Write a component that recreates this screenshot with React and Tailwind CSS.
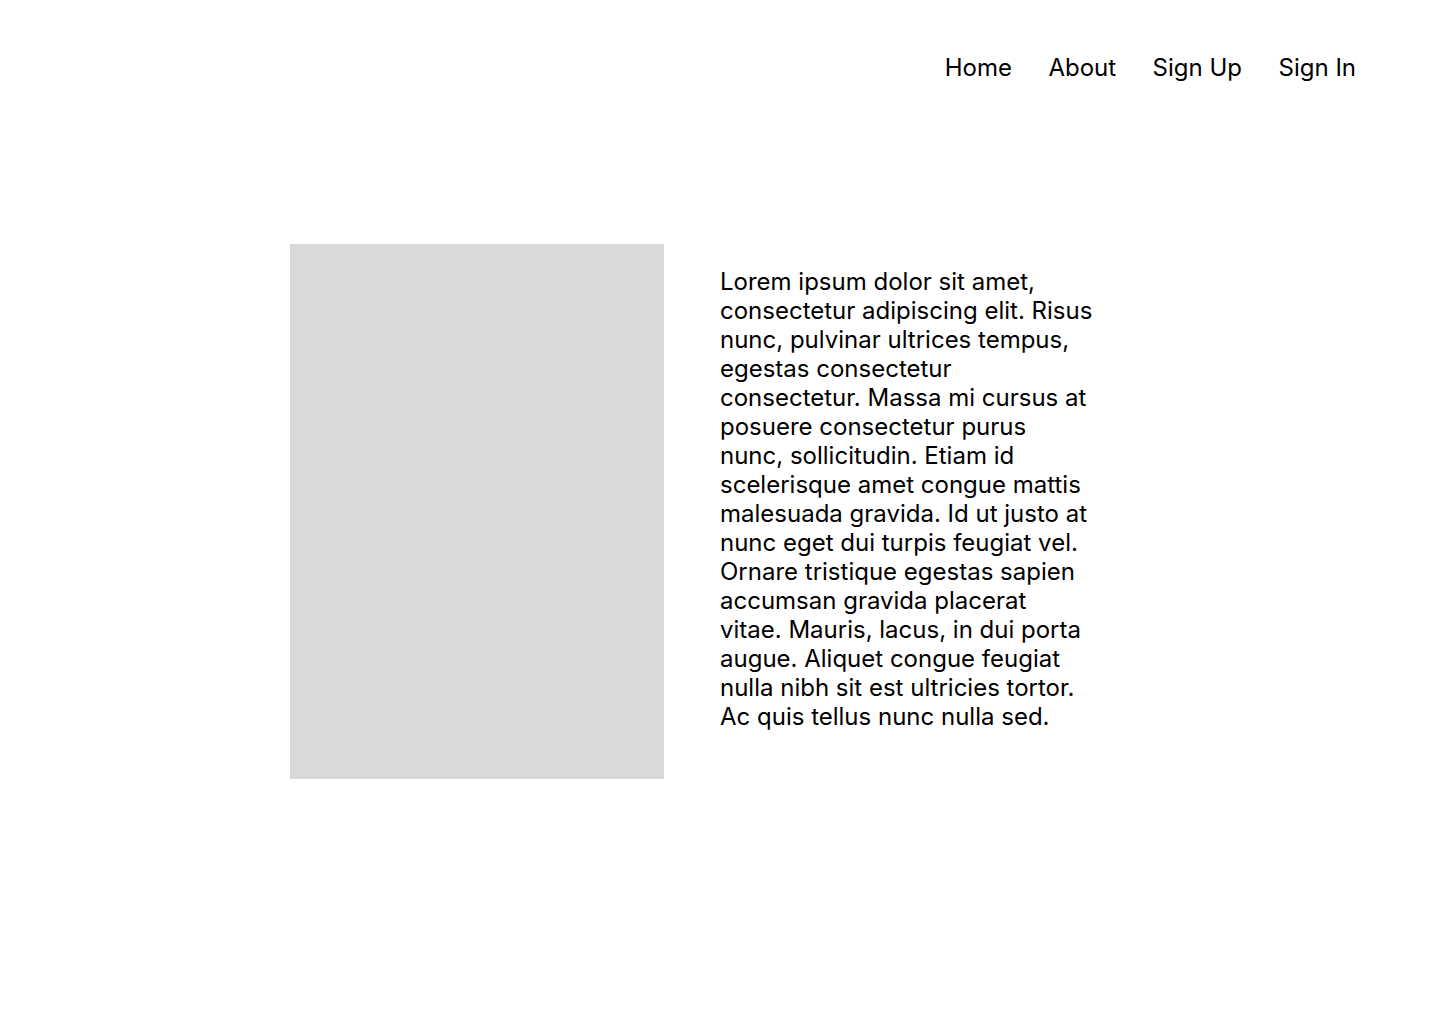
import React from 'react';

const links = ['Home', 'About', 'Sign Up', 'Sign In'];

const text =
  'Lorem ipsum dolor sit amet, consectetur adipiscing elit. Risus nunc, pulvinar ultrices tempus, egestas consectetur consectetur. Massa mi cursus at posuere consectetur purus nunc, sollicitudin. Etiam id scelerisque amet congue mattis malesuada gravida. Id ut justo at nunc eget dui turpis feugiat vel. Ornare tristique egestas sapien accumsan gravida placerat vitae. Mauris, lacus, in dui porta augue. Aliquet congue feugiat nulla nibh sit est ultricies tortor. Ac quis tellus nunc nulla sed.';

export default function App() {
  return (
    <div className="min-h-screen w-full bg-white text-black font-['Inter',sans-serif]">
      {/* Nav */}
      <nav className="flex justify-end gap-[36.5px] pt-[53px] pr-[84px]">
        {links.map((l) => (
          <a key={l} href="#" className="text-[24px] leading-[29px]">
            {l}
          </a>
        ))}
      </nav>

      {/* Content */}
      <section className="flex items-start gap-[56px] pl-[290px] mt-[162px]">
        <div className="w-[374px] h-[535px] bg-[#d9d9d9]" />
        <p className="w-[373px] mt-[23px] text-[24px] leading-[29px]">{text}</p>
      </section>
    </div>
  );
}
